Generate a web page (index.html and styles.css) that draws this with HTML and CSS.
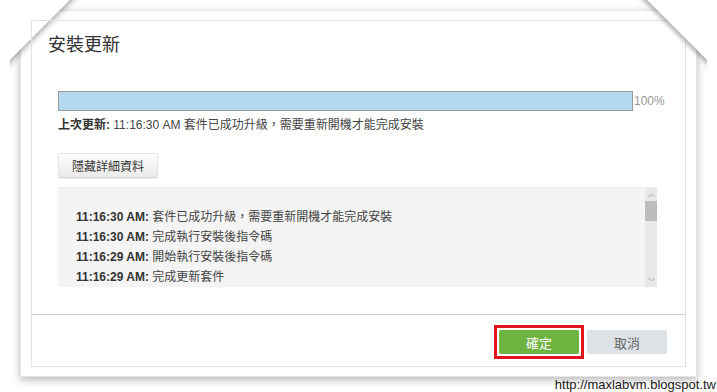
FILE: index.html
```html
<!DOCTYPE html>
<html>
<head>
<meta charset="utf-8">
<title>安裝更新</title>
<link rel="stylesheet" href="styles.css">
</head>
<body>

<div class="fold fold-left"></div>
<div class="fold fold-right"></div>

<div class="paper">
  <div class="dialog">
    <h1 class="title">安裝更新</h1>

    <div class="body">
      <div class="progress">
        <div class="bar"><div class="fill"></div></div>
        <span class="pct">100%</span>
      </div>
      <p class="status"><b>上次更新:</b> 11:16:30 AM 套件已成功升級，需要重新開機才能完成安裝</p>

      <button class="btn-detail">隱藏詳細資料</button>

      <div class="log">
        <div class="log-lines">
          <div><b>11:16:30 AM:</b> 套件已成功升級，需要重新開機才能完成安裝</div>
          <div><b>11:16:30 AM:</b> 完成執行安裝後指令碼</div>
          <div><b>11:16:29 AM:</b> 開始執行安裝後指令碼</div>
          <div><b>11:16:29 AM:</b> 完成更新套件</div>
        </div>
        <div class="scrollbar">
          <svg class="arrow" width="7" height="5" viewBox="0 0 7 5"><polyline points="0.5,4 3.5,1 6.5,4" fill="none" stroke="#a8a8a8" stroke-width="1"/></svg>
          <div class="thumb"></div>
          <div class="track"></div>
          <svg class="arrow" width="7" height="5" viewBox="0 0 7 5"><polyline points="0.5,1 3.5,4 6.5,1" fill="none" stroke="#a8a8a8" stroke-width="1"/></svg>
        </div>
      </div>
    </div>

    <div class="footer">
      <span class="mark"><button class="btn btn-ok">確定</button></span>
      <button class="btn btn-cancel">取消</button>
    </div>
  </div>
</div>

<div class="watermark">http://maxlabvm.blogspot.tw</div>

</body>
</html>
```

FILE: styles.css
```css
body {
 margin:0;
 background:#fff;
 font-family:"Liberation Sans","Noto Sans CJK TC",sans-serif;
 color:#444;
 position:relative;
 height:392px;
 overflow:hidden;
}

/* the paper frame */
.paper {
 margin:10px 20px 0;
 border:1px solid #e6e6e6;
 padding:9px 10px;
 background:#fff;
 box-shadow:0 3px 8px rgba(0,0,0,.28);
}

/* folded corners */
.fold {
 position:absolute;
 top:0;
 width:70px;
 height:70px;
}
.fold-left {
 left:10px;
 z-index:1;
 background:linear-gradient(135deg,#fff 0,#fff 42.8%,rgba(0,0,0,.28) 42.9%,rgba(0,0,0,.06) 47.5%,rgba(0,0,0,0) 51%);
}
.fold-right {
 right:10px;
 z-index:3;
 background:linear-gradient(225deg,#fff 0,#fff 42.8%,rgba(0,0,0,.3) 42.9%,rgba(0,0,0,.06) 47.5%,rgba(0,0,0,0) 51%);
}

.dialog {
 position:relative;
 z-index:2;
 border:1px solid #e2e2e2;
 height:345px;
 display:flex;
 flex-direction:column;
}

.title {
 margin:0;
 padding:12px 16px 0;
 font-size:18px;
 font-weight:normal;
 line-height:24px;
 color:#333;
}

.body { padding:34px 0 0 26px; }

.progress { display:flex; align-items:center; }
.bar {
 flex:none;
 width:573px;
 height:18px;
 border:1px solid #999;
 background:#fff;
}
.fill { height:100%; width:100%; background:#b4d9f1; }
.pct {
 font-size:12px;
 color:#999;
 line-height:20px;
 margin-left:1px;
}

.status {
 margin:6px 0 0;
 font-size:12px;
 line-height:16px;
 color:#444;
}
.status b { color:#333; }

.btn-detail {
 display:block;
 margin-top:20px;
 height:25px;
 padding:0 13px;
 font-family:inherit;
 font-size:12px;
 color:#333;
 border:1px solid #e4e4e4;
 border-bottom-color:#d6d6d6;
 border-radius:2px;
 background:linear-gradient(#fdfdfd,#ebebeb);
 box-shadow:0 1px 1px rgba(0,0,0,.08);
}

.log {
 margin-top:9px;
 width:599px;
 height:100px;
 display:flex;
 background:#f4f4f4;
 border-top:1px solid #ececec;
 box-sizing:border-box;
}
.log-lines {
 flex:1;
 overflow:hidden;
 padding:19px 0 0 18px;
 font-size:12px;
 line-height:20px;
 color:#444;
}
.log-lines b { color:#333; }

.scrollbar {
 width:12px;
 background:#e8e8e8;
 display:flex;
 flex-direction:column;
 align-items:center;
}
.scrollbar .arrow { margin:5px 0 3px; flex:none; }
.scrollbar .arrow:last-child { margin:3px 0 5px; }
.thumb { width:12px; height:20px; background:#bdbdbd; flex:none; }
.track { flex:1; }

.footer {
 margin-top:auto;
 border-top:1px solid #c8d0d4;
 padding:15px 18px 12px;
 display:flex;
 justify-content:flex-end;
 gap:8px;
}
.mark {
 display:flex;
 margin:-5px;
 padding:2px;
 border:3px solid #e1141d;
}
.btn {
 width:80px;
 height:24px;
 border:0;
 border-radius:2px;
 font-family:inherit;
 font-size:13px;
}
.btn-ok {
 background:#6cb33f;
 color:#fff;
}
.btn-cancel {
 background:#dde2e7;
 color:#666;
}

.watermark {
 text-align:right;
 font-size:13px;
 line-height:15px;
 color:#1a1a1a;
 padding-right:1px;
}
```
